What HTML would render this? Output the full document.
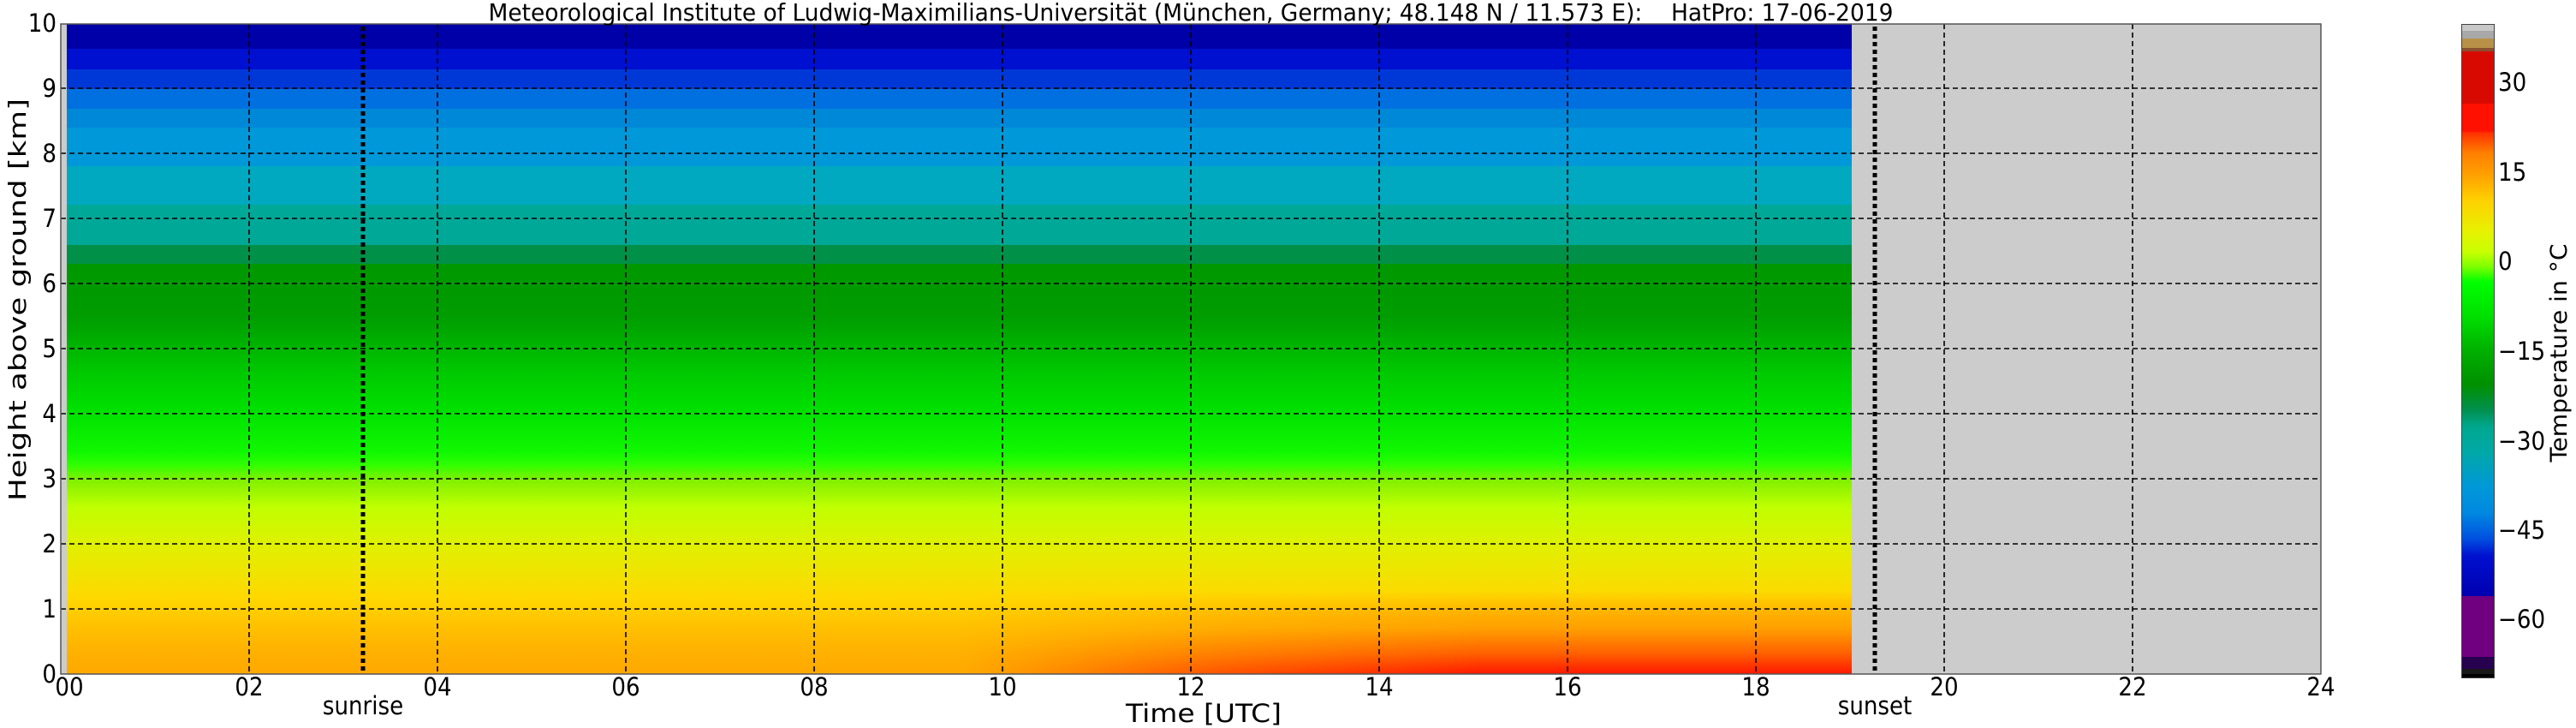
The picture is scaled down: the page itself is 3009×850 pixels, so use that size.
<!DOCTYPE html>
<html><head><meta charset="utf-8"><style>
html,body{margin:0;padding:0;background:#fff;width:3009px;height:850px;overflow:hidden}
#w{position:relative;width:3009px;height:850px}
.a{position:absolute}
#data{left:78px;top:28px;width:2085px;height:759px;background:linear-gradient(to bottom,#0000a8 0px,#0000a8 29px,#0010d0 29px,#0010d0 53px,#0038d8 53px,#0038d8 76px,#0070e0 76px,#0070e0 99px,#0088d8 99px,#0088d8 121px,#0098d8 121px,#0098d8 166px,#00a8c0 166px,#00a8c0 211px,#00a898 211px,#00a898 258px,#009048 258px,#009048 280px,#009800 280px,#009c00 340px,#00a800 360px,#00c400 400px,#00e000 450px,#10f800 500px,#30ff00 515px,#80f000 532px,#c0ff00 564px,#e0f000 609px,#ffd800 670px,#ffc000 705px,#ffb000 735px,#ffa800 759px)}
#red{left:78px;top:690px;width:2085px;height:97px;background:linear-gradient(to bottom,rgba(255,176,0,0) 0%,#ffa000 45%,#ff6000 75%,#ff1800 100%);-webkit-mask-image:linear-gradient(to right,transparent 0px,transparent 1050px,rgba(0,0,0,.6) 1350px,#000 1650px,#000 2085px);mask-image:linear-gradient(to right,transparent 0px,transparent 1050px,rgba(0,0,0,.6) 1350px,#000 1650px,#000 2085px)}
#cb{left:2875px;top:28px;width:39px;height:764px;border:1px solid #444;box-sizing:border-box;background:linear-gradient(to bottom,#c8c8c8 0px,#c8c8c8 7px,#a8a8a8 7px,#a8a8a8 16px,#b89048 16px,#b89048 27px,#8a5030 27px,#8a5030 31px,#d80a00 31px,#d80a00 92px,#ff1000 92px,#ff1000 124px,#ff3000 126px,#ff8000 150px,#ffa000 175px,#ffd000 205px,#e8f000 240px,#c8ff00 265px,#80ff00 282px,#00ff00 300px,#00e000 340px,#00b000 380px,#009000 420px,#009050 450px,#00a890 470px,#00a8a8 500px,#0098d8 540px,#0088e0 570px,#0050e0 600px,#0010d0 620px,#0000b0 667px,#700080 667px,#700080 738px,#280050 738px,#280050 752px,#181818 752px,#181818 758px,#000 758px)}
</style></head><body><div id="w">
<div class="a" style="left:71px;top:28px;width:2640px;height:759px;background:#cccccc"></div>
<div class="a" id="data"></div>
<div class="a" id="red"></div>
<div class="a" id="cb"></div>
<svg class="a" style="left:0;top:0" width="3009" height="850" xmlns="http://www.w3.org/2000/svg" font-family="DejaVu Sans Condensed, DejaVu Sans, Liberation Sans, sans-serif">
<g stroke="#000" stroke-width="1.6" stroke-dasharray="6,4" fill="none">
<line x1="291" y1="28" x2="291" y2="787"/><line x1="511" y1="28" x2="511" y2="787"/>
<line x1="731" y1="28" x2="731" y2="787"/><line x1="951" y1="28" x2="951" y2="787"/>
<line x1="1171" y1="28" x2="1171" y2="787"/><line x1="1391" y1="28" x2="1391" y2="787"/>
<line x1="1611" y1="28" x2="1611" y2="787"/><line x1="1831" y1="28" x2="1831" y2="787"/>
<line x1="2051" y1="28" x2="2051" y2="787"/><line x1="2271" y1="28" x2="2271" y2="787"/>
<line x1="2491" y1="28" x2="2491" y2="787"/>
<line x1="71" y1="103" x2="2711" y2="103"/><line x1="71" y1="179" x2="2711" y2="179"/>
<line x1="71" y1="255" x2="2711" y2="255"/><line x1="71" y1="331" x2="2711" y2="331"/>
<line x1="71" y1="407" x2="2711" y2="407"/><line x1="71" y1="483" x2="2711" y2="483"/>
<line x1="71" y1="559" x2="2711" y2="559"/><line x1="71" y1="635" x2="2711" y2="635"/>
<line x1="71" y1="711" x2="2711" y2="711"/>
</g>
<g stroke="#000" stroke-width="5" stroke-dasharray="5,4">
<line x1="424" y1="31" x2="424" y2="787"/><line x1="2190" y1="31" x2="2190" y2="787"/>
</g>
<rect x="71" y="28" width="2640" height="759" fill="none" stroke="#555" stroke-width="1.5"/>
<g font-size="29" fill="#000" text-anchor="end">
<text x="66" y="37">10</text><text x="66" y="113">9</text><text x="66" y="189">8</text>
<text x="66" y="265">7</text><text x="66" y="341">6</text><text x="66" y="417">5</text>
<text x="66" y="493">4</text><text x="66" y="569">3</text><text x="66" y="645">2</text>
<text x="66" y="721">1</text><text x="66" y="797">0</text>
</g>
<g font-size="29" fill="#000" text-anchor="middle">
<text x="81" y="812">00</text><text x="291" y="812">02</text><text x="511" y="812">04</text>
<text x="731" y="812">06</text><text x="951" y="812">08</text><text x="1171" y="812">10</text>
<text x="1391" y="812">12</text><text x="1611" y="812">14</text><text x="1831" y="812">16</text>
<text x="2051" y="812">18</text><text x="2271" y="812">20</text><text x="2491" y="812">22</text>
<text x="2711" y="812">24</text>
<text x="424" y="834">sunrise</text><text x="2190" y="834">sunset</text>
<text x="1406" y="843" font-size="29" font-family="DejaVu Sans, sans-serif" textLength="182" lengthAdjust="spacingAndGlyphs">Time [UTC]</text>
<text x="1391" y="24" font-size="28" textLength="1641" lengthAdjust="spacingAndGlyphs" xml:space="preserve">Meteorological Institute of Ludwig-Maximilians-Universität (München, Germany; 48.148 N / 11.573 E):&#160;&#160;&#160;&#160;HatPro: 17-06-2019</text>
<text transform="translate(30,350) rotate(-90)" font-size="28" font-family="DejaVu Sans, sans-serif" textLength="470" lengthAdjust="spacingAndGlyphs">Height above ground [km]</text>
<text transform="translate(2998,412) rotate(-90)" font-size="27" textLength="255" lengthAdjust="spacingAndGlyphs">Temperature in °C</text>
</g>
<g font-size="29" fill="#000">
<text x="2918" y="106">30</text><text x="2918" y="211">15</text><text x="2918" y="315">0</text>
<text x="2918" y="420">−15</text><text x="2918" y="525">−30</text><text x="2918" y="629">−45</text>
<text x="2918" y="733">−60</text>
</g>
</svg>
</div></body></html>
